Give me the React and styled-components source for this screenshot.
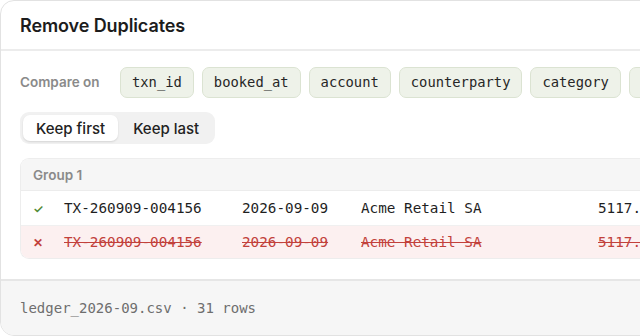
import React from 'react'
import styled, { createGlobalStyle } from 'styled-components'

const mono = `"DejaVu Sans Mono", "Liberation Mono", monospace`
const sans = `Inter, "Noto Sans", sans-serif`

const GlobalStyle = createGlobalStyle`
  html, body {
    margin: 0;
    padding: 0;
    background: #ffffff;
    overflow: hidden;
  }
  body {
    font-family: ${sans};
    color: #1c1c1c;
  }
`

const Card = styled.div`
  width: 780px;
  height: 336px;
  box-sizing: border-box;
  border: 1px solid #e2e2e2;
  border-radius: 14px;
  background: #fff;
  overflow: hidden;
  display: flex;
  flex-direction: column;
`

const Header = styled.div`
  height: 48px;
  flex: none;
  display: flex;
  align-items: center;
  padding: 0 19px;
  border-bottom: 2px solid #ececec;
`

const Title = styled.h1`
  margin: 0;
  font-size: 18px;
  font-weight: 600;
  letter-spacing: -0.1px;
  color: #1c1c1c;
`

const Body = styled.div`
  flex: 1;
  padding: 16px 0 0 19px;
  display: flex;
  flex-direction: column;
`

const CompareRow = styled.div`
  display: flex;
  align-items: center;
  gap: 8px;
  height: 30px;
`

const Label = styled.span`
  font-size: 13.5px;
  font-weight: 600;
  color: #8a8a8a;
  width: 92px;
  flex: none;
`

const Chip = styled.span`
  flex: none;
  height: 29px;
  display: flex;
  align-items: center;
  padding: 0 11px;
  border: 1px solid #dbe3d2;
  background: #eef2e9;
  border-radius: 7px;
  font-family: ${mono};
  font-size: 13.8px;
  color: #262626;
`

const Segmented = styled.div`
  margin-top: 15px;
  align-self: flex-start;
  display: flex;
  padding: 3px;
  gap: 2px;
  background: #f1f1f1;
  border-radius: 9px;
`

const SegButton = styled.button`
  border: none;
  font-family: ${sans};
  font-size: 15px;
  font-weight: 500;
  color: #222;
  height: 26px;
  padding: 0 13px;
  border-radius: 7px;
  background: ${p => (p.$active ? '#fff' : 'transparent')};
  box-shadow: ${p => (p.$active ? '0 1px 2px rgba(0,0,0,0.12)' : 'none')};
  cursor: pointer;
`

const Group = styled.div`
  margin-top: 14px;
  border: 1px solid #ededed;
  border-right: none;
  border-radius: 9px 0 0 9px;
  overflow: hidden;
`

const GroupHead = styled.div`
  height: 31px;
  display: flex;
  align-items: center;
  padding-left: 12px;
  background: #f6f6f6;
  border-bottom: 1px solid #ececec;
  font-size: 13.5px;
  font-weight: 600;
  color: #8a8a8a;
`

const Row = styled.div`
  display: grid;
  grid-template-columns: 31px 178px 119px 237px 120px;
  align-items: center;
  height: ${p => (p.$removed ? 32 : 34)}px;
  padding-left: 12px;
  background: ${p => (p.$removed ? '#fcf0f0' : '#fff')};
  border-bottom: ${p => (p.$removed ? 'none' : '1px solid #f0f0f0')};
  color: ${p => (p.$removed ? '#c2413b' : '#1f1f1f')};
  font-family: ${mono};
  font-size: 14.3px;
`

const Mark = styled.span`
  font-family: ${sans};
  font-size: 12px;
  font-weight: 600;
  color: ${p => (p.$removed ? '#c2413b' : '#4f8a36')};
`

const Cell = styled.span`
  white-space: nowrap;
  text-decoration: ${p => (p.$removed ? 'line-through' : 'none')};
  text-decoration-thickness: 1px;
`

const Footer = styled.div`
  height: 54px;
  flex: none;
  display: flex;
  align-items: center;
  padding: 0 19px;
  background: #f6f6f6;
  border-top: 2px solid #e6e6e6;
  font-family: ${mono};
  font-size: 14px;
  color: #6e6e6e;
`

const fields = ['txn_id', 'booked_at', 'account', 'counterparty', 'category', 'amount']

const record = ['TX-260909-004156', '2026-09-09', 'Acme Retail SA', '5117.40']

const RecordRow = ({ removed }) => (
  <Row $removed={removed}>
    <Mark $removed={removed}>{removed ? '✕' : '✓'}</Mark>
    {record.map(v => (
      <Cell key={v} $removed={removed}>
        {v}
      </Cell>
    ))}
  </Row>
)

const App = () => {
  return (
    <>
      <GlobalStyle />
      <Card>
        <Header>
          <Title>Remove Duplicates</Title>
        </Header>
        <Body>
          <CompareRow>
            <Label>Compare on</Label>
            {fields.map(f => (
              <Chip key={f}>{f}</Chip>
            ))}
          </CompareRow>
          <Segmented>
            <SegButton $active>Keep first</SegButton>
            <SegButton>Keep last</SegButton>
          </Segmented>
          <Group>
            <GroupHead>Group 1</GroupHead>
            <RecordRow />
            <RecordRow removed />
          </Group>
        </Body>
        <Footer>ledger_2026-09.csv · 31 rows</Footer>
      </Card>
    </>
  )
}

export default App
